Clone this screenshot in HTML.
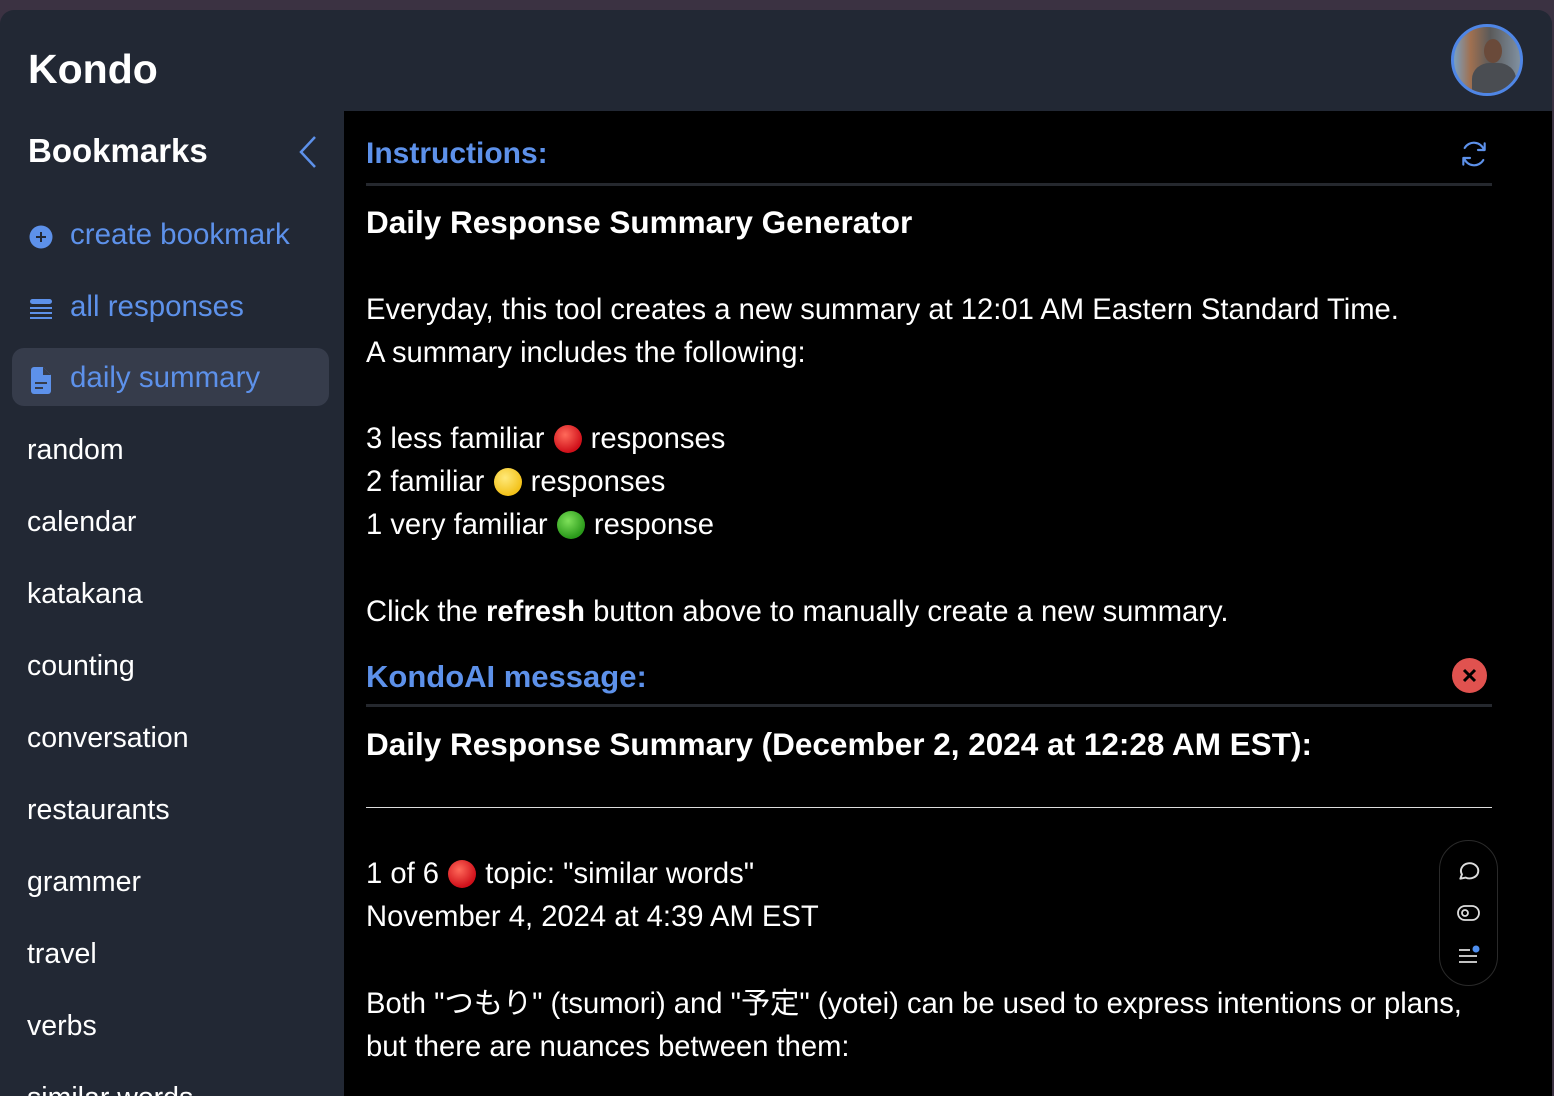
<!DOCTYPE html>
<html><head><meta charset="utf-8"><style>
*{margin:0;padding:0;box-sizing:border-box}
html{overflow:hidden;width:1554px;height:1096px}
body{width:1554px;height:1096px;overflow:hidden;background:#3b3242;font-family:"Liberation Sans","Noto Sans CJK JP",sans-serif;position:relative}
.win{position:absolute;left:0;top:10px;width:1552px;height:1086px;background:#222834;border-radius:14px 14px 0 0;overflow:hidden}
.main{position:absolute;left:344px;top:101px;width:1208px;height:985px;background:#000}
.t{position:absolute;white-space:nowrap;line-height:44px;color:#fff}
.s{font-size:28.5px;left:27px}
.m{font-size:29.2px;left:366px}
.b{font-weight:bold}
.blue{color:#5d91ea}
.dot{display:inline-block;width:28px;height:28px;border-radius:50%;vertical-align:-5px;margin:0 1px}
.red{background:radial-gradient(circle at 40% 35%,#ff6a5a,#d0101a 70%)}
.yel{background:radial-gradient(circle at 40% 35%,#ffe97a,#f3c21a 70%)}
.grn{background:radial-gradient(circle at 40% 35%,#7ee05a,#2a9a1a 70%)}
.hr{position:absolute;left:366px;width:1126px;background:#25282e;height:3px}
</style></head><body>
<div class="win">
<div class="t b" style="left:28px;top:35px;font-size:41px;line-height:48px">Kondo</div>
<div style="position:absolute;left:1451px;top:14px;width:72px;height:72px;border-radius:50%;border:3px solid #4f86e6;background:linear-gradient(90deg,#7aa0c0 0%,#a07050 25%,#5a5a5a 55%,#8090a0 100%);overflow:hidden">
<div style="position:absolute;left:30px;top:12px;width:18px;height:24px;border-radius:50%;background:#6a4a3a"></div>
<div style="position:absolute;left:18px;top:36px;width:44px;height:40px;border-radius:40% 40% 0 0;background:#4a4d52"></div>
</div>
<div class="main"></div>
</div>
<div class="t b" style="left:28px;top:129px;font-size:33px">Bookmarks</div>
<svg style="position:absolute;left:296px;top:135px" width="24" height="34" viewBox="0 0 24 34"><path d="M19 2 L5 17 L19 32" fill="none" stroke="#5d91ea" stroke-width="2.5"/></svg>
<svg style="position:absolute;left:29px;top:225px" width="24" height="24"><circle cx="12" cy="12" r="11.5" fill="#5d91ea"/><path d="M12 7v10M7 12h10" stroke="#222834" stroke-width="2"/></svg>
<div class="t s blue" style="left:70px;top:213px;font-size:29.5px">create bookmark</div>
<svg style="position:absolute;left:30px;top:298px" width="24" height="22"><rect x="0" y="1" width="22" height="5" rx="2.5" fill="#5d91ea"/><rect x="0" y="9" width="22" height="2" fill="#5d91ea"/><rect x="0" y="14" width="22" height="2" fill="#5d91ea"/><rect x="0" y="19" width="22" height="2" fill="#5d91ea"/></svg>
<div class="t s blue" style="left:70px;top:285px;font-size:29.5px">all responses</div>
<div style="position:absolute;left:12px;top:348px;width:317px;height:58px;border-radius:12px;background:#363c4b"></div>
<svg style="position:absolute;left:31px;top:367px" width="22" height="27"><path d="M0 3a3 3 0 0 1 3-3h9l8 8v16a3 3 0 0 1-3 3H3a3 3 0 0 1-3-3z" fill="#5d91ea"/><path d="M12 0v8h8" fill="#363c4b"/><path d="M4 16h12M4 21h8" stroke="#363c4b" stroke-width="2"/></svg>
<div class="t s blue" style="left:70px;top:356px;font-size:29.5px">daily summary</div>
<div class="t s" style="top:428px">random</div>
<div class="t s" style="top:500px">calendar</div>
<div class="t s" style="top:572px">katakana</div>
<div class="t s" style="top:644px">counting</div>
<div class="t s" style="top:716px">conversation</div>
<div class="t s" style="top:788px">restaurants</div>
<div class="t s" style="top:860px">grammer</div>
<div class="t s" style="top:932px">travel</div>
<div class="t s" style="top:1004px">verbs</div>
<div class="t s" style="top:1076px">similar words</div>

<div class="t m b blue" style="top:132px;font-size:30px">Instructions:</div>
<svg style="position:absolute;left:1458px;top:138px" width="32" height="32" viewBox="0 0 24 24" fill="none" stroke="#5d91ea" stroke-width="1.6" stroke-linecap="round" stroke-linejoin="round"><path d="M20 4v5h-5"/><path d="M4 20v-5h5"/><path d="M19.5 9A8 8 0 0 0 5 7.5M4.5 15A8 8 0 0 0 19 16.5"/></svg>
<div class="hr" style="top:183px"></div>
<div class="t m b" style="top:200px;font-size:31.5px">Daily Response Summary Generator</div>
<div class="t m" style="top:288px">Everyday, this tool creates a new summary at 12:01 AM Eastern Standard Time.</div>
<div class="t m" style="top:331px">A summary includes the following:</div>
<div class="t m" style="top:417px">3 less familiar <span class="dot red"></span> responses</div>
<div class="t m" style="top:460px">2 familiar <span class="dot yel"></span> responses</div>
<div class="t m" style="top:503px">1 very familiar <span class="dot grn"></span> response</div>
<div class="t m" style="top:590px">Click the <b>refresh</b> button above to manually create a new summary.</div>
<div class="t m b blue" style="top:655px;font-size:31px">KondoAI message:</div>
<div style="position:absolute;left:1452px;top:658px;width:35px;height:35px;border-radius:50%;background:#e0524f"></div>
<svg style="position:absolute;left:1462px;top:668px" width="15" height="15"><path d="M2 2l11 11M13 2L2 13" stroke="#000" stroke-width="3"/></svg>
<div class="hr" style="top:704px"></div>
<div class="t m b" style="top:722px;font-size:31.5px">Daily Response Summary (December 2, 2024 at 12:28 AM EST):</div>
<div class="hr" style="top:807px;height:1px;background:#ddd"></div>
<div class="t m" style="top:852px">1 of 6 <span class="dot red"></span> topic: "similar words"</div>
<div class="t m" style="top:895px">November 4, 2024 at 4:39 AM EST</div>
<div class="t m" style="top:982px">Both "つもり" (tsumori) and "予定" (yotei) can be used to express intentions or plans,</div>
<div class="t m" style="top:1025px">but there are nuances between them:</div>

<div style="position:absolute;left:1439px;top:840px;width:59px;height:146px;border-radius:30px;border:1px solid #2a2a2a;background:#000"></div>
<svg style="position:absolute;left:1456px;top:857px" width="26" height="26" viewBox="0 0 24 24" fill="none" stroke="#ddd" stroke-width="1.8"><path d="M4 20l1.5-4A8 7 0 1 1 9 19z" stroke-linejoin="round"/></svg>
<svg style="position:absolute;left:1456px;top:902px" width="26" height="22" viewBox="0 0 26 22" fill="none" stroke="#ddd" stroke-width="1.8"><rect x="2" y="4" width="21" height="14" rx="7"/><circle cx="9" cy="11" r="3"/></svg>
<svg style="position:absolute;left:1456px;top:943px" width="26" height="24" viewBox="0 0 26 24" stroke="#ddd" stroke-width="1.8"><path d="M3 7h11M3 13h18M3 19h18"/><circle cx="20" cy="6" r="3.5" fill="#4f8ff0" stroke="none"/></svg>
</body></html>
